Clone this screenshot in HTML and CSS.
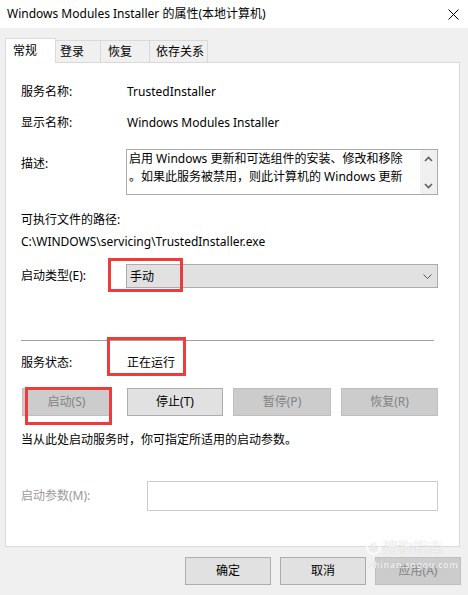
FILE: index.html
```html
<!DOCTYPE html>
<html lang="zh-CN">
<head>
<meta charset="utf-8">
<title>Windows Modules Installer 的属性(本地计算机)</title>
<link rel="stylesheet" href="styles.css">
</head>
<body>
<div class="window">
  <div class="titlebar">
    <span class="title">Windows Modules Installer 的属性(本地计算机)</span>
    <svg class="close" width="11" height="11" viewBox="0 0 11 11"><path d="M0.5 0.5 L10.5 10.5 M10.5 0.5 L0.5 10.5" stroke="#000" stroke-width="1" fill="none"/></svg>
  </div>
  <div class="tabs">
    <div class="tab active">常规</div>
    <div class="tab t2">登录</div>
    <div class="tab t3">恢复</div>
    <div class="tab t4">依存关系</div>
  </div>
  <div class="panel">
    <div class="row r1"><span class="label">服务名称:</span><span class="value">TrustedInstaller</span></div>
    <div class="row r2"><span class="label">显示名称:</span><span class="value">Windows Modules Installer</span></div>
    <div class="row r3">
      <span class="label desc-label">描述:</span>
      <div class="desc">
        <div class="desc-text">启用 Windows 更新和可选组件的安装、修改和移除<br>。如果此服务被禁用，则此计算机的 Windows 更新</div>
        <div class="scrollbar">
          <svg width="9" height="6" viewBox="0 0 9 6"><path d="M1 5 L4.5 1.5 L8 5" stroke="#606060" stroke-width="1.6" fill="none"/></svg>
          <svg width="9" height="6" viewBox="0 0 9 6"><path d="M1 1 L4.5 4.5 L8 1" stroke="#606060" stroke-width="1.6" fill="none"/></svg>
        </div>
      </div>
    </div>
    <div class="line l4">可执行文件的路径:</div>
    <div class="line path">C:\WINDOWS\servicing\TrustedInstaller.exe</div>
    <div class="row r6">
      <span class="label">启动类型(E):</span>
      <div class="combo">
        <span>手动</span>
        <svg width="9" height="5" viewBox="0 0 9 5"><path d="M0.5 0.5 L4.5 4.5 L8.5 0.5" stroke="#555" stroke-width="1" fill="none"/></svg>
      </div>
    </div>
    <div class="sep"></div>
    <div class="row r7"><span class="label">服务状态:</span><span class="value">正在运行</span></div>
    <div class="btnrow">
      <div class="btn disabled b1">启动(S)</div>
      <div class="btn b2">停止(T)</div>
      <div class="btn disabled b3">暂停(P)</div>
      <div class="btn disabled b4">恢复(R)</div>
    </div>
    <div class="line help">当从此处启动服务时，你可指定所适用的启动参数。</div>
    <div class="row r9">
      <span class="label wide dim">启动参数(M):</span>
      <div class="input"></div>
    </div>
  </div>
  <div class="footer">
    <div class="btn fbtn">确定</div>
    <div class="btn fbtn">取消</div>
    <div class="btn fbtn disabled">应用(A)</div>
  </div>

  <div class="mark m1"></div>
  <div class="mark m2"></div>
  <div class="mark m3"></div>
  <div class="watermark">
    <div class="wm1"><span class="wm-s">S</span>搜狗指南</div>
    <div class="wm2">zhinan.sogou.com</div>
  </div>
</div>
</body>
</html>
```
FILE: styles.css
```css
* { box-sizing: border-box; }
html, body { margin: 0; padding: 0; }
body {
  width: 468px;
  height: 595px;
  background: #f0f0f0;
  font-family: "Noto Sans", "Noto Sans CJK SC", sans-serif;
  font-size: 12px;
  color: #000;
  overflow: hidden;
}
.window { position: relative; width: 468px; height: 595px; }
.titlebar {
  height: 28px;
  background: #fff;
  display: flex;
  align-items: center;
  justify-content: space-between;
  padding: 0 9px 0 7px;
}
.title { line-height: 16px; font-size: 12px; }
.close { display: block; }

.tabs {
  display: flex;
  align-items: flex-end;
  margin-top: 10px;
  padding-left: 5px;
  height: 24px;
  position: relative;
  z-index: 2;
}
.tab {
  height: 22px;
  line-height: 21px;
  background: #f0f0f0;
  border: 1px solid #d9d9d9;
  border-bottom: none;
  border-left: none;
}
.tab.active {
  height: 25px;
  width: 51px;
  background: #fff;
  border-left: 1px solid #d9d9d9;
  padding-left: 7px;
  line-height: 23px;
  margin-bottom: -1px;
}
.t2 { width: 45px; padding-left: 4px; }
.t3 { width: 49px; padding-left: 7px; }
.t4 { width: 58px; padding-left: 6px; }

.panel {
  margin-left: 5px;
  width: 455px;
  height: 485px;
  background: #fff;
  border: 1px solid #d9d9d9;
  padding-left: 15px;
  display: flex;
  flex-direction: column;
}
.row { display: flex; align-items: center; }
.label { width: 105px; flex: none; line-height: 20px; }
.label.wide { width: 126px; }
.dim { color: #9a9a9a; }
.value { padding-left: 1px; line-height: 20px; }
.r1 { margin-top: 19px; height: 20px; }
.r2 { margin-top: 11px; height: 20px; }
.r3 { margin-top: 16px; align-items: flex-start; }
.desc-label { margin-top: 5px; }
.desc {
  width: 312px;
  height: 46px;
  border: 1px solid #ababab;
  display: flex;
}
.desc-text {
  flex: 1;
  padding-left: 2px;
  line-height: 18px;
  white-space: nowrap;
  overflow: hidden;
}
.scrollbar {
  width: 17px;
  background: #f0f0f0;
  display: flex;
  flex-direction: column;
  align-items: center;
  justify-content: space-between;
  padding: 6px 0 5px;
}
.scrollbar svg { display: block; }
.line { line-height: 20px; height: 20px; }
.l4 { margin-top: 15px; }
.path { margin-top: 2px; }
.r6 { margin-top: 12px; }
.combo {
  width: 312px;
  height: 24px;
  background: #e1e1e1;
  border: 1px solid #adadad;
  display: flex;
  align-items: center;
  justify-content: space-between;
  padding: 0 5px 0 3px;
}
.combo svg { display: block; }
.sep {
  margin-top: 52px;
  width: 413px;
  height: 1px;
  background: #a0a0a0;
}
.r7 { margin-top: 12px; height: 20px; }
.btnrow {
  margin-top: 15px;
  display: flex;
  padding-left: 1px;
}
.btn {
  height: 28px;
  background: #e1e1e1;
  border: 1px solid #adadad;
  display: flex;
  align-items: center;
  justify-content: center;
  line-height: 16px;
}
.btn.disabled {
  background: #cccccc;
  border-color: #bfbfbf;
  color: #838383;
}
.b1 { width: 89px; }
.b2 { width: 96px; margin-left: 16px; }
.b3 { width: 98px; margin-left: 10px; }
.b4 { width: 97px; margin-left: 10px; }
.help { margin-top: 14px; }
.r9 { margin-top: 31px; }
.input {
  width: 291px;
  height: 30px;
  border: 1px solid #cccccc;
  background: #fff;
}
.footer {
  display: flex;
  justify-content: flex-end;
  gap: 9px;
  margin-top: 10px;
  padding-right: 7px;
}
.fbtn { width: 86px; height: 28px; }

.mark {
  position: absolute;
  border: 3px solid #ee3b3b;
}
.m1 { left: 108px; top: 258px; width: 75px; height: 34px; }
.m2 { left: 107px; top: 337px; width: 79px; height: 39px; }
.m3 { left: 25px; top: 387px; width: 87px; height: 38px; }

.watermark {
  position: absolute;
  left: 366px;
  top: 538px;
  color: rgba(255, 255, 255, 0.75);
  text-shadow: 0 0 1px rgba(120, 120, 120, 0.35);
  pointer-events: none;
}
.wm1 { font-size: 15px; line-height: 18px; display: flex; align-items: center; gap: 2px; }
.wm-s {
  width: 15px; height: 15px; border-radius: 50%;
  border: 2px solid rgba(255,255,255,0.75);
  font-size: 10px; line-height: 11px; text-align: center; font-weight: bold;
}
.wm2 { font-size: 9px; line-height: 10px; margin-top: 4px; margin-left: 3px; letter-spacing: 0.5px; font-weight: bold; }
```
